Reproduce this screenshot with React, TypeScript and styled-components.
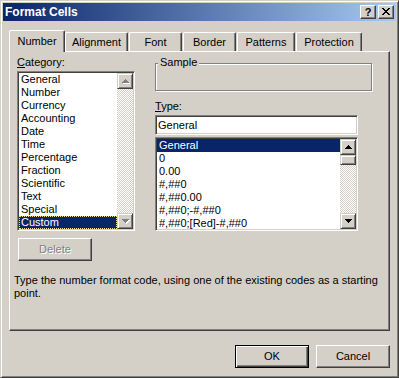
import React from "react";
import styled, { createGlobalStyle, css } from "styled-components";

const FACE = "#D4D0C8";
const SHADOW = "#808080";
const DARK = "#404040";
const NAVY = "#0A246A";

const Global = createGlobalStyle`
  html, body { margin: 0; padding: 0; background: ${FACE}; }
  body {
    font-family: "Liberation Sans", Arial, sans-serif;
    font-size: 11px;
    line-height: 13px;
    color: #000;
  }
  * { box-sizing: border-box; }
`;

const raised = css`
  border: 1px solid;
  border-color: #fff ${DARK} ${DARK} #fff;
  box-shadow: inset -1px -1px ${SHADOW};
  background: ${FACE};
`;

const scrollRaised = css`
  border: 1px solid;
  border-color: ${FACE} ${DARK} ${DARK} ${FACE};
  box-shadow: inset 1px 1px #fff, inset -1px -1px ${SHADOW};
  background: ${FACE};
`;

const sunken = css`
  border: 1px solid;
  border-color: ${SHADOW} #fff #fff ${SHADOW};
  padding: 1px;
  box-shadow: inset 1px 1px ${DARK}, inset -1px -1px ${FACE};
`;

const Window = styled.div`
  width: 399px;
  height: 378px;
  display: flex;
  flex-direction: column;
  background: ${FACE};
  border: 1px solid;
  border-color: ${FACE} ${DARK} ${DARK} ${FACE};
  padding: 2px;
  box-shadow: inset 1px 1px #fff, inset -1px -1px ${SHADOW};
`;

const TitleBar = styled.div`
  flex: none;
  height: 18px;
  display: flex;
  align-items: center;
  padding: 0 2px;
  background: linear-gradient(to right, ${NAVY}, #a6caf0);
`;

const Title = styled.div`
  flex: 1;
  color: #fff;
  font-weight: bold;
  font-size: 12px;
  line-height: 18px;
  white-space: nowrap;
`;

const CaptionButtons = styled.div`
  display: flex;
  gap: 2px;
`;

const CaptionButton = styled.div`
  ${raised};
  width: 16px;
  height: 14px;
  display: flex;
  align-items: center;
  justify-content: center;
  font-weight: bold;
  font-size: 11px;
  line-height: 12px;
  padding-bottom: 1px;
`;

const Body = styled.div`
  flex: 1;
  display: flex;
  flex-direction: column;
  padding: 9px 6px 0 6px;
`;

const TabStrip = styled.div`
  flex: none;
  height: 21px;
  display: flex;
  align-items: flex-end;
`;

const Tab = styled.div<{ $active?: boolean; $w: number }>`
  position: relative;
  z-index: 1;
  width: ${(p) => p.$w}px;
  height: ${(p) => (p.$active ? 22 : 19)}px;
  margin-bottom: ${(p) => (p.$active ? -1 : 0)}px;
  margin-right: ${(p) => (p.$active ? 0 : 1)}px;
  border-top: 1px solid #fff;
  border-left: 1px solid #fff;
  border-right: 1px solid ${DARK};
  box-shadow: inset -1px 0 ${SHADOW};
  border-radius: 2px 2px 0 0;
  background: ${FACE};
  text-align: center;
  white-space: nowrap;
  padding-top: ${(p) => (p.$active ? 4 : 3)}px;
`;

const Panel = styled.div`
  flex: none;
  height: 280px;
  display: flex;
  flex-direction: column;
  border-top: 1px solid #fff;
  border-left: 1px solid #fff;
  border-right: 1px solid ${DARK};
  border-bottom: 1px solid ${DARK};
  box-shadow: inset -1px -1px ${SHADOW};
  padding: 4px 4px 0 4px;
`;

const Columns = styled.div`
  display: flex;
  gap: 20px;
  margin-left: 3px;
`;

const Column = styled.div<{ $w: number }>`
  width: ${(p) => p.$w}px;
  display: flex;
  flex-direction: column;
  align-items: flex-start;
`;

const Label = styled.div<{ $mt?: number }>`
  margin-top: ${(p) => p.$mt ?? 0}px;
  line-height: 13px;
  white-space: nowrap;
`;

const GroupBox = styled.div`
  position: relative;
  margin-top: 7px;
  width: 217px;
  height: 28px;
  border: 1px solid ${SHADOW};
  box-shadow: inset 1px 1px #fff, 1px 1px #fff;
`;

const Legend = styled.span`
  position: absolute;
  left: 2px;
  top: -8px;
  padding: 0 2px;
  background: ${FACE};
  line-height: 13px;
`;

const TextBox = styled.div`
  ${sunken};
  margin-top: 2px;
  width: 203px;
  height: 20px;
  background: #fff;
  padding-left: 2px;
  display: flex;
  align-items: center;
`;

const ListBox = styled.div<{ $w: number; $h: number; $mt: number }>`
  ${sunken};
  margin-top: ${(p) => p.$mt}px;
  width: ${(p) => p.$w}px;
  height: ${(p) => p.$h}px;
  display: flex;
  background: #fff;
`;

const Items = styled.div`
  flex: 1;
  overflow: hidden;
  background: #fff;
`;

const Item = styled.div<{ $selected?: boolean; $focus?: boolean }>`
  height: 13px;
  line-height: 13px;
  padding-left: 2px;
  white-space: nowrap;
  ${(p) =>
    p.$selected &&
    css`
      background: ${NAVY};
      color: #fff;
    `}
  ${(p) =>
    p.$focus &&
    css`
      outline: 1px dotted #f5db95;
      outline-offset: -1px;
    `}
`;

const ScrollBar = styled.div`
  flex: none;
  width: 16px;
  display: flex;
  flex-direction: column;
`;

const ScrollArrow = styled.div`
  ${scrollRaised};
  flex: none;
  height: 16px;
  display: flex;
  align-items: center;
  justify-content: center;
`;

const Track = styled.div`
  flex: 1;
  background: repeating-conic-gradient(${FACE} 0 25%, #fff 0 50%) 0 0 / 2px 2px;
`;

const Thumb = styled.div`
  ${scrollRaised};
  flex: none;
  height: 10px;
`;

const PushButton = styled.button<{ $default?: boolean; $disabled?: boolean; $mt?: number; $ml?: number }>`
  ${raised};
  margin: ${(p) => p.$mt ?? 0}px 0 0 ${(p) => p.$ml ?? 0}px;
  width: 74px;
  height: 23px;
  padding: 0;
  font: inherit;
  color: #000;
  display: flex;
  align-items: center;
  justify-content: center;
  ${(p) =>
    p.$default &&
    css`
      border: 1px solid #000;
      box-shadow: inset 1px 1px #fff, inset -1px -1px ${DARK}, inset -2px -2px ${SHADOW};
    `}
  ${(p) =>
    p.$disabled &&
    css`
      color: ${SHADOW};
      text-shadow: 1px 1px #fff;
    `}
`;

const Description = styled.div`
  margin-top: 13px;
  line-height: 13px;
`;

const Footer = styled.div`
  display: flex;
  justify-content: flex-end;
  gap: 7px;
  margin-top: 14px;
`;

const UP = "M3 0h1v1h1v1h1v1h1v1H0V3h1V2h1V1h1z";
const DOWN = "M0 0h7v1h-1v1h-1v1h-1v1H3V3H2V2H1V1H0z";

const Arrow = ({ dir, disabled }: { dir: "up" | "down"; disabled?: boolean }) => {
  const d = dir === "up" ? UP : DOWN;
  return (
    <svg width="8" height="5" viewBox="0 0 8 5" shapeRendering="crispEdges" style={{ marginLeft: 1 }}>
      {disabled && <path d={d} fill="#fff" transform="translate(1 1)" />}
      <path d={d} fill={disabled ? SHADOW : "#000"} />
    </svg>
  );
};

const CloseGlyph = () => (
  <svg width="8" height="7" viewBox="0 0 8 7" shapeRendering="crispEdges">
    <path
      fill="#000"
      d="M0 0h2v1H0zM6 0h2v1H6zM1 1h2v1H1zM5 1h2v1H5zM2 2h4v1H2zM3 3h2v1H3zM2 4h4v1H2zM1 5h2v1H1zM5 5h2v1H5zM0 6h2v1H0zM6 6h2v1H6z"
    />
  </svg>
);

const tabs = [
  { label: "Number", w: 56, active: true },
  { label: "Alignment", w: 63 },
  { label: "Font", w: 53 },
  { label: "Border", w: 53 },
  { label: "Patterns", w: 58 },
  { label: "Protection", w: 66 },
];

const categories = [
  "General",
  "Number",
  "Currency",
  "Accounting",
  "Date",
  "Time",
  "Percentage",
  "Fraction",
  "Scientific",
  "Text",
  "Special",
  "Custom",
];

const types = [
  "General",
  "0",
  "0.00",
  "#,##0",
  "#,##0.00",
  "#,##0;-#,##0",
  "#,##0;[Red]-#,##0",
];

export default function App() {
  return (
    <>
      <Global />
      <Window>
        <TitleBar>
          <Title>Format Cells</Title>
          <CaptionButtons>
            <CaptionButton>?</CaptionButton>
            <CaptionButton>
              <CloseGlyph />
            </CaptionButton>
          </CaptionButtons>
        </TitleBar>
        <Body>
          <TabStrip>
            {tabs.map((t) => (
              <Tab key={t.label} $w={t.w} $active={t.active}>
                {t.label}
              </Tab>
            ))}
          </TabStrip>
          <Panel>
            <Columns>
              <Column $w={118}>
                <Label>
                  <u>C</u>ategory:
                </Label>
                <ListBox $w={118} $h={160} $mt={2}>
                  <Items>
                    {categories.map((c, i) => (
                      <Item key={c} $selected={i === categories.length - 1} $focus={i === categories.length - 1}>
                        {c}
                      </Item>
                    ))}
                  </Items>
                  <ScrollBar>
                    <ScrollArrow>
                      <Arrow dir="up" disabled />
                    </ScrollArrow>
                    <Track />
                    <ScrollArrow>
                      <Arrow dir="down" disabled />
                    </ScrollArrow>
                  </ScrollBar>
                </ListBox>
                <PushButton $disabled $mt={7} $ml={1}>
                  Delete
                </PushButton>
              </Column>
              <Column $w={218}>
                <GroupBox>
                  <Legend>Sample</Legend>
                </GroupBox>
                <Label $mt={9}>
                  <u>T</u>ype:
                </Label>
                <TextBox>General</TextBox>
                <ListBox $w={203} $h={94} $mt={2}>
                  <Items>
                    {types.map((t, i) => (
                      <Item key={t} $selected={i === 0}>
                        {t}
                      </Item>
                    ))}
                  </Items>
                  <ScrollBar>
                    <ScrollArrow>
                      <Arrow dir="up" />
                    </ScrollArrow>
                    <Thumb />
                    <Track />
                    <ScrollArrow>
                      <Arrow dir="down" />
                    </ScrollArrow>
                  </ScrollBar>
                </ListBox>
              </Column>
            </Columns>
            <Description>
              Type the number format code, using one of the existing codes as a starting point.
            </Description>
          </Panel>
          <Footer>
            <PushButton $default>OK</PushButton>
            <PushButton>Cancel</PushButton>
          </Footer>
        </Body>
      </Window>
    </>
  );
}
